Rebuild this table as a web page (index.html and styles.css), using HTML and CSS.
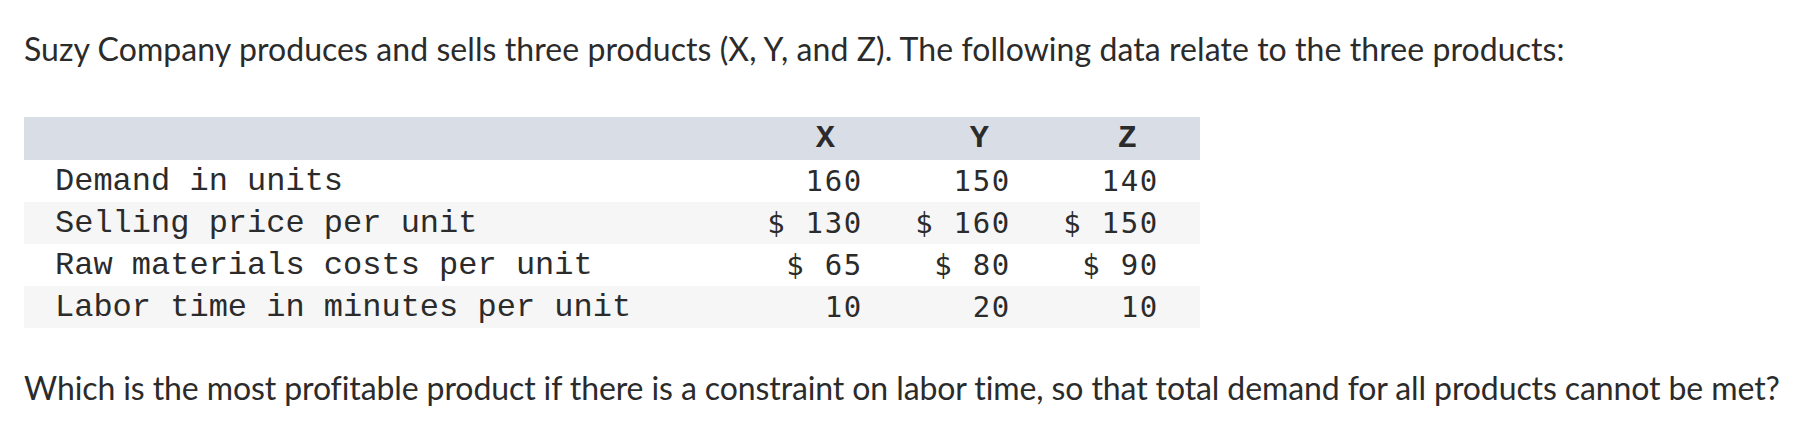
FILE: index.html
```html
<!DOCTYPE html>
<html>
<head>
<meta charset="utf-8">
<link rel="stylesheet" href="styles.css">
</head>
<body>
<div class="page">
  <p class="intro">Suzy Company produces and sells three products (X, Y, and Z). The following data relate to the three products:</p>
  <table class="data">
    <thead>
      <tr class="head">
        <th class="label"></th>
        <th class="col col-first">X</th>
        <th class="col">Y</th>
        <th class="col">Z</th>
      </tr>
    </thead>
    <tbody>
      <tr class="odd">
        <td class="label">Demand in units</td>
        <td class="num">160</td>
        <td class="num">150</td>
        <td class="num">140</td>
      </tr>
      <tr class="even">
        <td class="label">Selling price per unit</td>
        <td class="num">$ 130</td>
        <td class="num">$ 160</td>
        <td class="num">$ 150</td>
      </tr>
      <tr class="odd">
        <td class="label">Raw materials costs per unit</td>
        <td class="num">$ 65</td>
        <td class="num">$ 80</td>
        <td class="num">$ 90</td>
      </tr>
      <tr class="even">
        <td class="label">Labor time in minutes per unit</td>
        <td class="num">10</td>
        <td class="num">20</td>
        <td class="num">10</td>
      </tr>
    </tbody>
  </table>
  <p class="question">Which is the most profitable product if there is a constraint on labor time, so that total demand for all products cannot be met?</p>
</div>
</body>
</html>
```

FILE: styles.css
```css
html, body {
  margin: 0;
  padding: 0;
  background: #ffffff;
}

.page {
  padding: 29px 24px 0 24px;
  color: #2b2b2b;
  font-family: "Lato", "Liberation Sans", sans-serif;
  font-variant-ligatures: none;
}

.intro,
.question {
  margin: 0;
  font-size: 32px;
  line-height: 40px;
  white-space: nowrap;
}

.intro {
  letter-spacing: 0.07px;
}

.data {
  margin-top: 48px;
  width: 1176px;
  border-collapse: collapse;
  table-layout: fixed;
}

.data th,
.data td {
  padding: 0;
  white-space: nowrap;
}

.head {
  background: #d9dee6;
  height: 43px;
}

.odd {
  background: #ffffff;
  height: 42px;
}

.even {
  background: #f6f6f6;
  height: 42px;
}

.label {
  width: 701px;
  padding-left: 31px !important;
  text-align: left;
  font-family: "Liberation Mono", "Courier New", monospace;
  font-size: 32px;
  font-weight: normal;
  color: #2b2b2b;
}

.col {
  width: 85px;
  text-align: right;
  padding-right: 63px !important;
  font-family: "Liberation Mono", "Courier New", monospace;
  font-size: 32px;
  font-weight: bold;
  color: #2b2b2b;
}

.col.col-first {
  width: 79px;
  padding-right: 69px !important;
}

.num {
  text-align: right;
  padding-right: 41px !important;
  font-family: "DejaVu Sans Mono", monospace;
  font-size: 29px;
  letter-spacing: 1.7px;
  color: #2b2b2b;
}

.question {
  margin-top: 40px;
  letter-spacing: -0.1px;
}
```
